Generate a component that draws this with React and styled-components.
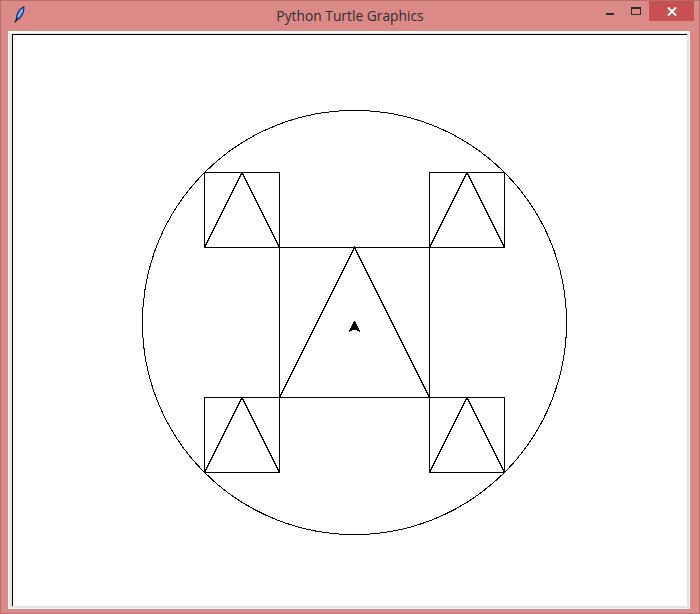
import styled, { createGlobalStyle } from 'styled-components';

const GlobalStyle = createGlobalStyle`
  html, body { margin: 0; padding: 0; background: #fff; }
  body { font-family: "Open Sans", "Liberation Sans", sans-serif; }
`;

const Window = styled.div`
  width: 700px;
  height: 614px;
  box-sizing: border-box;
  background: #db8a87;
  border: 1px solid #b96e6b;
  display: flex;
  flex-direction: column;
`;

const TitleBar = styled.div`
  height: 30px;
  flex: none;
  display: grid;
  grid-template-columns: 1fr auto 1fr;
  align-items: start;
`;

const IconCell = styled.div`
  padding: 5px 0 0 13px;
  display: flex;
`;

const Title = styled.div`
  font-size: 13.8px;
  line-height: 30px;
  color: #2e2e2e;
  white-space: nowrap;
`;

const Controls = styled.div`
  justify-self: end;
  display: flex;
  padding-right: 5px;
`;

const CaptionButton = styled.div`
  width: ${props => props.w}px;
  height: 20px;
  display: flex;
  justify-content: center;
  align-items: flex-start;
  box-sizing: border-box;
  padding-top: ${props => props.top}px;
  background: ${props => (props.danger ? '#c75050' : 'transparent')};
`;

const Dash = styled.div`
  width: 8px;
  height: 2px;
  background: #2b2b2b;
`;

const MaxBox = styled.div`
  width: 10px;
  height: 8px;
  box-sizing: border-box;
  border: 1px solid #2b2b2b;
  border-top-width: 2px;
`;

const Client = styled.div`
  flex: 1;
  margin: 0 9px 4px 7px;
  display: flex;
  border-style: solid;
  border-color: #ffffff;
  border-width: 2px 1px 1px 1px;
`;

const Sunken = styled.div`
  flex: 1;
  display: flex;
  border-style: solid;
  border-color: #e3e3e3;
  border-width: 1px 2px 2px 3px;
`;

const Canvas = styled.div`
  flex: 1;
  background: #fff;
  border-top: 1px solid #000;
  border-left: 1px solid #000;
  overflow: hidden;
  svg { display: block; }
`;

function Feather() {
  return (
    <svg width="11" height="17" viewBox="0 0 11 17">
      <path d="M2.3 14 C2.3 8.5 4.8 3.5 9.8 0.8 C10.3 5.5 8 10.5 3.6 13.8 Z" fill="#4f8fe0" stroke="#17336a" strokeWidth="1.1" />
      <path d="M4.3 10.5 L8.3 3.5" stroke="#cfe4ff" strokeWidth="0.9" />
      <path d="M1 16.5 L3.4 11.8" stroke="#10203c" strokeWidth="1.4" />
    </svg>
  );
}

function CloseGlyph() {
  return (
    <svg width="10" height="9" viewBox="0 0 10 9">
      <path d="M1 0.5 L9 8.5 M9 0.5 L1 8.5" stroke="#fff" strokeWidth="2" />
    </svg>
  );
}

const squares = [
  [204, 172],
  [429, 172],
  [204, 397],
  [429, 397],
];

function Cell({ x, y, s }) {
  const a = x + 0.5;
  const b = y + 0.5;
  return (
    <g>
      <rect x={a} y={b} width={s} height={s} />
      <polyline points={`${a},${b + s} ${a + s / 2},${b} ${a + s},${b + s}`} />
    </g>
  );
}

function Drawing() {
  return (
    <svg width="674" height="571" viewBox="13 35 674 571" shapeRendering="crispEdges">
      <g fill="none" stroke="#000" strokeWidth="1">
        <circle cx="354.5" cy="322.5" r="212.1" />
        {squares.map(([x, y]) => (
          <Cell key={`${x}-${y}`} x={x} y={y} s={75} />
        ))}
        <Cell x={279} y={247} s={150} />
      </g>
      <polygon points="354.5,320.5 348.5,332 354.5,329.5 360.5,332" fill="#000" />
    </svg>
  );
}

export default function App() {
  return (
    <>
      <GlobalStyle />
      <Window>
        <TitleBar>
          <IconCell>
            <Feather />
          </IconCell>
          <Title>Python Turtle Graphics</Title>
          <Controls>
            <CaptionButton w={26} top={12}>
              <Dash />
            </CaptionButton>
            <CaptionButton w={26} top={6}>
              <MaxBox />
            </CaptionButton>
            <CaptionButton w={45} top={6} danger>
              <CloseGlyph />
            </CaptionButton>
          </Controls>
        </TitleBar>
        <Client>
          <Sunken>
            <Canvas>
              <Drawing />
            </Canvas>
          </Sunken>
        </Client>
      </Window>
    </>
  );
}
